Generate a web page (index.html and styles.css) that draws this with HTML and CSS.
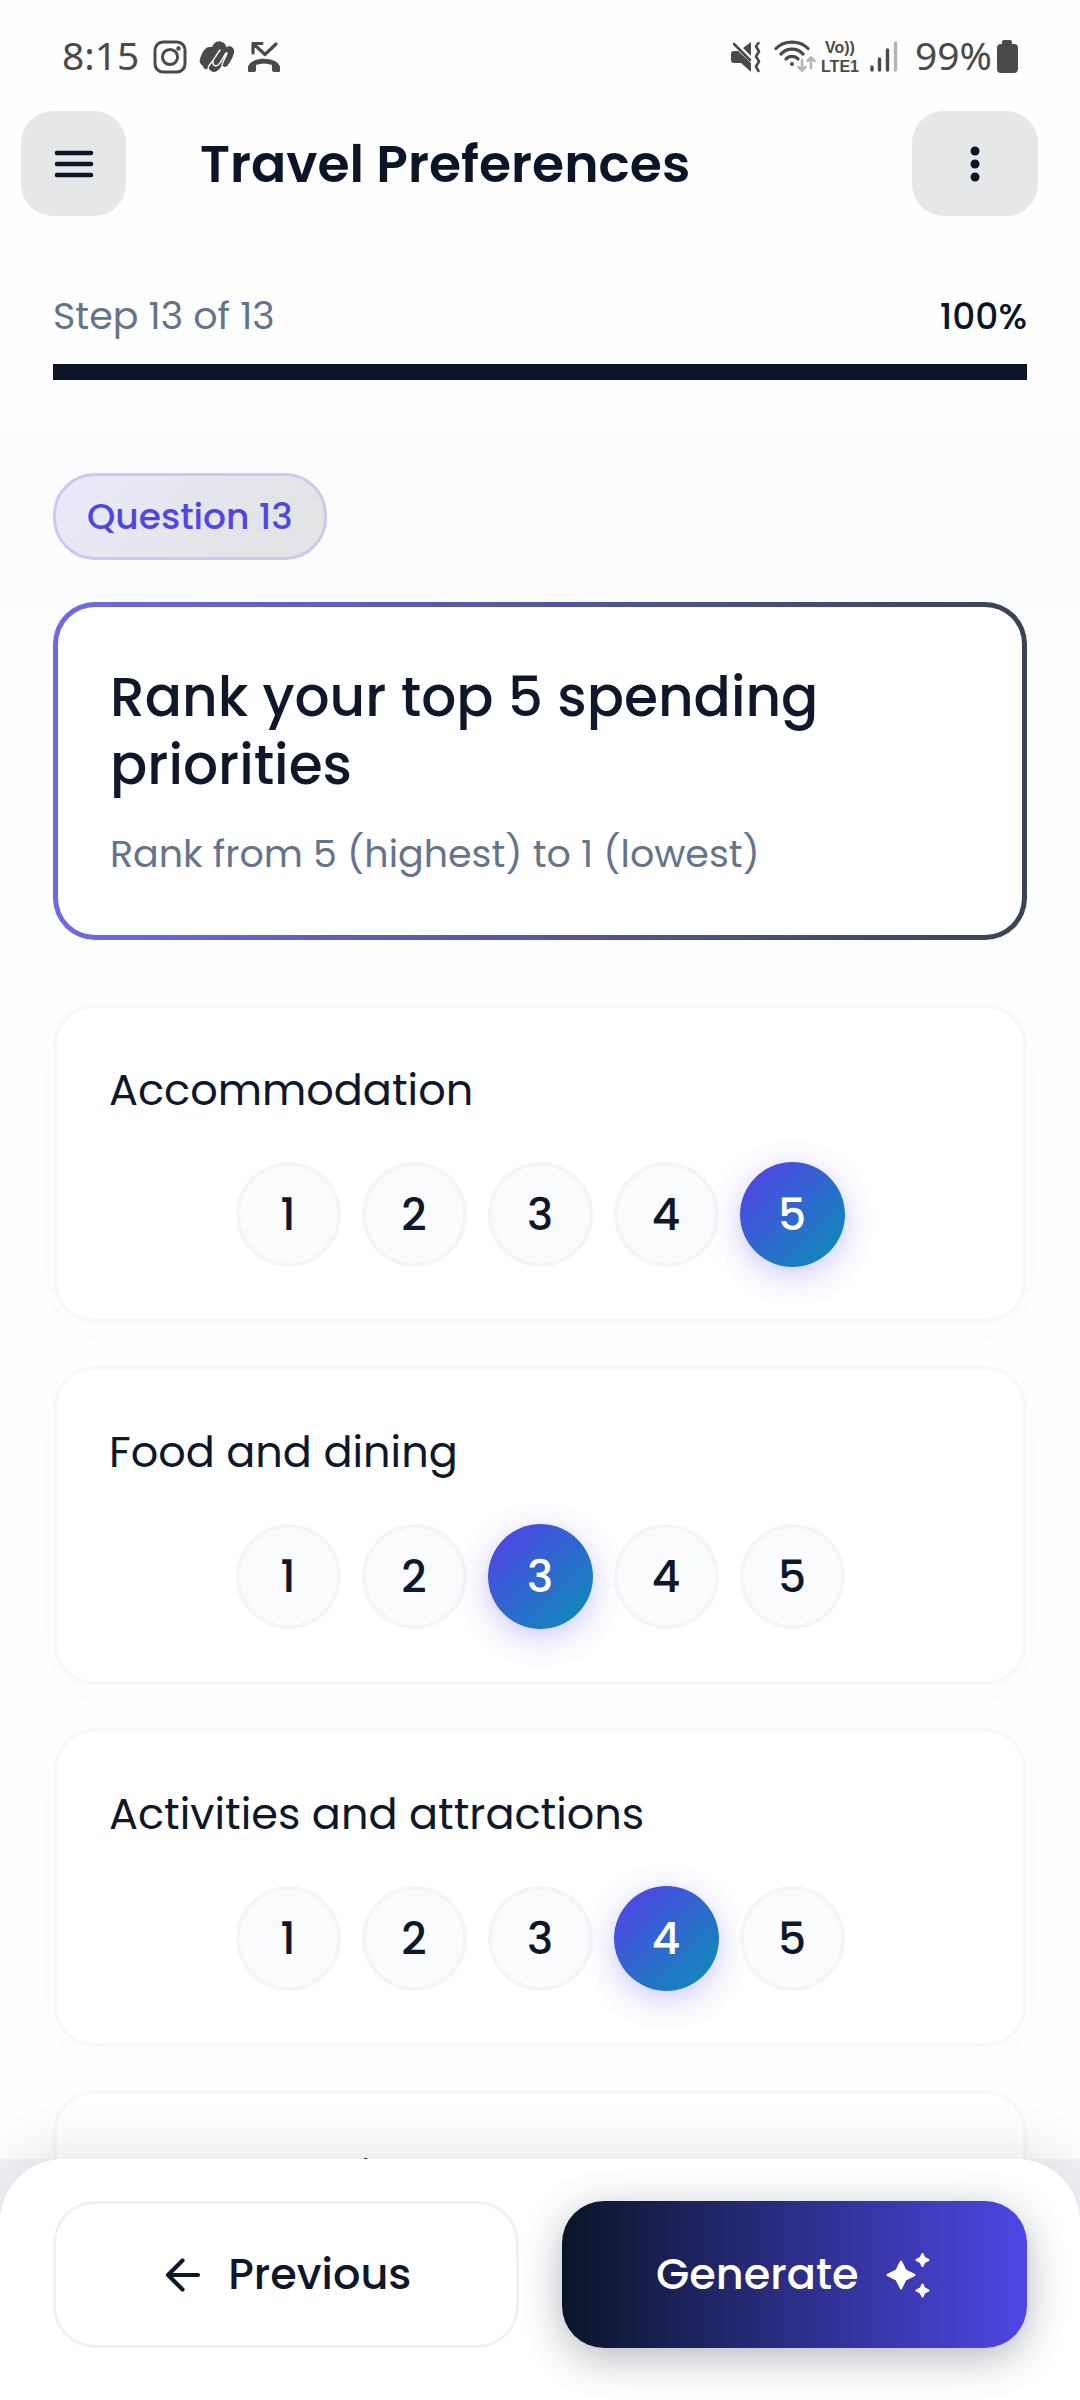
FILE: index.html
```html
<!DOCTYPE html>
<html lang="en">
<head>
<meta charset="utf-8">
<meta name="viewport" content="width=device-width, initial-scale=1">
<title>Travel Preferences</title>
<link rel="stylesheet" href="styles.css">
</head>
<body>
<div class="status">
  <div class="status-group status-left">
    <span class="status-text">8:15</span>
    <svg width="34" height="34" viewBox="0 0 34 34" fill="none" stroke="currentColor" stroke-width="3"><rect x="2" y="2" width="30" height="30" rx="8"/><circle cx="17" cy="17" r="7.6"/><circle cx="25.5" cy="8.5" r="2.2" fill="currentColor" stroke="none"/></svg>
    <svg width="36" height="32" viewBox="0 0 36 32"><path fill="currentColor" d="M1 18C3 12 5 7 10 6L13 6C15 1 19-1 23 1C26 2 27 4 27 6C32 4 36 7 35 12C34 16 31 21 29 24C27 27 24 26 23 24C21 28 18 31 15 31C13 31 11 29 10 28C6 29 4 27 4 25C1 23 0 21 1 18Z"/><path fill="none" stroke="#fff" stroke-width="1.4" stroke-linecap="round" d="M21 9C17 14 15 19 12 22C10 24 9 27 9 29M27 12C24 16 23 21 19 24C16 26 13 24 14 20M23 24C24 20 27 16 28 12"/></svg>
    <svg width="34" height="32" viewBox="0 0 34 32"><path fill="none" stroke="currentColor" stroke-width="3.2" stroke-linecap="round" stroke-linejoin="round" d="M15 2.5H6V12M6 2.5L18 13.5L29 3"/><path fill="currentColor" d="M1 30V26C3 15 31 15 33 26V30Q33 31 32 31H27Q25 31 25 29V24Q17 21 9 24V29Q9 31 7 31H2Q1 31 1 30Z"/></svg>
  </div>
  <div class="status-group status-right">
    <svg width="32" height="34" viewBox="0 0 32 34"><path fill="currentColor" d="M4 11H8L21 23V32L11 23H4Q1 23 1 20V14Q1 11 4 11ZM13 8L21 2V16Z"/><path fill="none" stroke="currentColor" stroke-width="2.6" stroke-linecap="round" stroke-linejoin="round" d="M4 4L20 20M28.500 3L26 6.500L29 11.500L26 16.500L29 21.500L26 26.500L28.500 31"/></svg>
    <svg class="status-wifi" width="43" height="34" viewBox="0 0 43 34" fill="none" stroke="currentColor" stroke-width="3.2" stroke-linecap="round"><path d="M2 8.500C10 0 26 0 34 8.500M7 14C13 7.500 23 7.500 29 14M12 19C15 15.500 21 15.500 24 19"/><circle cx="18" cy="24" r="2" fill="currentColor" stroke="none"/><path stroke="#b5b5b5" stroke-width="2.6" stroke-linejoin="round" d="M28 20V30M24.500 27L28 30.500L31.500 27M37 28V18M33.500 21L37 17.500L40.500 21"/></svg>
    <span class="status-network"><span>Vo))</span><span>LTE1</span></span>
    <svg class="status-signal" width="30" height="32" viewBox="0 0 30 32" stroke="currentColor" stroke-width="3.4" stroke-linecap="round"><path d="M3 26V29M10.500 18V29M18.500 9V29"/><path stroke="#b5b5b5" d="M26.500 2V29"/></svg>
    <span class="status-text">99%</span>
    <svg width="22" height="34" viewBox="0 0 22 34" fill="currentColor"><rect x="6" y="0" width="10" height="8" rx="2"/><rect x="1" y="4" width="21" height="29" rx="4"/></svg>
  </div>
</div>
<header class="topbar">
  <button class="icon-btn" type="button" aria-label="Menu"><svg width="48" height="48" viewBox="0 0 48 48" stroke="currentColor" stroke-width="4.6" stroke-linecap="round"><path d="M7 13H41M7 24H41M7 35H41"/></svg></button>
  <h1 class="page-title">Travel Preferences</h1>
  <button class="icon-btn icon-btn-wide" type="button" aria-label="More options"><svg width="48" height="48" viewBox="0 0 48 48" fill="currentColor"><circle cx="24" cy="11" r="4.500"/><circle cx="24" cy="24" r="4.500"/><circle cx="24" cy="37" r="4.500"/></svg></button>
</header>
<section class="progress">
  <div class="progress-row"><label for="step-progress">Step 13 of 13</label><strong class="percent">100%</strong></div>
  <progress id="step-progress" class="progress-bar" value="13" max="13"></progress>
</section>
<main class="content">
  <span class="tag">Question 13</span>
  <section class="question">
    <h2 class="question-title">Rank your top 5 spending priorities</h2>
    <p class="question-hint">Rank from 5 (highest) to 1 (lowest)</p>
  </section>
  <form class="options">
    <fieldset class="option">
      <legend class="option-name">Accommodation</legend>
      <div class="ratings">
        <label class="rating"><input type="radio" name="accommodation" value="1"><span>1</span></label>
        <label class="rating"><input type="radio" name="accommodation" value="2"><span>2</span></label>
        <label class="rating"><input type="radio" name="accommodation" value="3"><span>3</span></label>
        <label class="rating"><input type="radio" name="accommodation" value="4"><span>4</span></label>
        <label class="rating"><input type="radio" name="accommodation" value="5" checked><span>5</span></label>
      </div>
    </fieldset>
    <fieldset class="option">
      <legend class="option-name">Food and dining</legend>
      <div class="ratings">
        <label class="rating"><input type="radio" name="food" value="1"><span>1</span></label>
        <label class="rating"><input type="radio" name="food" value="2"><span>2</span></label>
        <label class="rating"><input type="radio" name="food" value="3" checked><span>3</span></label>
        <label class="rating"><input type="radio" name="food" value="4"><span>4</span></label>
        <label class="rating"><input type="radio" name="food" value="5"><span>5</span></label>
      </div>
    </fieldset>
    <fieldset class="option">
      <legend class="option-name">Activities and attractions</legend>
      <div class="ratings">
        <label class="rating"><input type="radio" name="activities" value="1"><span>1</span></label>
        <label class="rating"><input type="radio" name="activities" value="2"><span>2</span></label>
        <label class="rating"><input type="radio" name="activities" value="3"><span>3</span></label>
        <label class="rating"><input type="radio" name="activities" value="4" checked><span>4</span></label>
        <label class="rating"><input type="radio" name="activities" value="5"><span>5</span></label>
      </div>
    </fieldset>
    <fieldset class="option">
      <legend class="option-name">Transportation</legend>
    </fieldset>
  </form>
</main>
<footer class="footer">
  <div class="actions">
    <button class="action action-previous" type="button">
      <svg width="42" height="42" viewBox="0 0 42 42" fill="none" stroke="currentColor" stroke-width="4.2" stroke-linecap="round" stroke-linejoin="round"><path d="M38 21H8M22.500 6.500L8 21L22.500 35.500"/></svg>
      Previous
    </button>
    <button class="action action-generate" type="button">
      Generate
      <svg width="48" height="48" viewBox="0 0 48 48" fill="currentColor" stroke="currentColor" stroke-width="2" stroke-linejoin="round"><path d="M17 10.500L21.500 19.500L30.500 24L21.500 28.500L17 37.500L12.500 28.500L3.500 24L12.500 19.500ZM38.500 3L40.500 7L44.500 9L40.500 11L38.500 15L36.500 11L32.500 9L36.500 7ZM38.500 33.500L40.500 37.500L44.500 39.500L40.500 41.500L38.500 45.500L36.500 41.500L32.500 39.500L36.500 37.500Z"/></svg>
    </button>
  </div>
</footer>
</body>
</html>
```
FILE: styles.css
```css
* { box-sizing: border-box; }

body {
  display: flex;
  flex-direction: column;
  height: 100vh;
  margin: 0;
  background: #fefefe;
  color: #0f172a;
  font-family: Poppins, Inter, sans-serif;
}

h1, h2, p { margin: 0; }
button { font: inherit; color: inherit; border: 0; cursor: pointer; }
svg { flex: none; }

/* Device status bar */
.status {
  display: flex;
  flex: none;
  justify-content: space-between;
  padding: 28px 62px 25px;
  color: #4a4a4a;
  font-family: "Noto Sans", sans-serif;
}
.status-group { display: flex; align-items: center; }
.status-left { gap: 12px; }
.status-left .status-text { margin-right: 2px; }
.status-right { gap: 4px; }
.status-text { padding-bottom: 4px; font-size: 39px; line-height: 54px; }
.status-wifi { margin-left: 8px; }
.status-network {
  display: grid;
  justify-items: center;
  font-family: "Liberation Sans", sans-serif;
  font-size: 16px;
  font-weight: 700;
  line-height: 19px;
}
.status-signal { margin: 0 12px 0 6px; }

/* Header */
.topbar { display: flex; flex: none; align-items: center; padding: 0 42px 0 21px; color: #0a1528; }
.page-title { flex: 1; margin-left: 74px; font-size: 52px; font-weight: 600; line-height: 64px; }
.icon-btn {
  display: grid;
  place-items: center;
  width: 105px;
  height: 105px;
  padding: 0;
  border-radius: 32px;
  background: #e6e7e9;
}
.icon-btn-wide { width: 126px; }

/* Step progress */
.progress { flex: none; padding: 72px 53px 52px; }
.progress-row {
  display: flex;
  justify-content: space-between;
  align-items: baseline;
  margin-bottom: 19px;
  color: #64748b;
  font-size: 38px;
  line-height: 56px;
}
.percent { color: #0a1528; font-size: 36px; font-weight: 500; }
.progress-bar {
  display: block;
  width: 100%;
  height: 16px;
  border: 0;
  background: #e6e7e9;
  appearance: none;
}
.progress-bar::-webkit-progress-bar { background: #e6e7e9; }
.progress-bar::-webkit-progress-value { background: #0a1528; }

/* Scrolling content */
.content {
  flex: 1;
  min-height: 0;
  padding: 41px 53px;
  overflow-y: auto;
  scrollbar-width: none;
  background: linear-gradient(#fafbfd, #fdfefe 320px, #fefefe 640px);
}
.tag {
  display: block;
  width: fit-content;
  margin-bottom: 42px;
  padding: 15px 31px;
  border: 3px solid #cdc9ee;
  border-radius: 42px;
  background: linear-gradient(135deg, #ebe9fc, #e3e4e6 75%) border-box;
  color: #4f46e5;
  font-size: 36px;
  font-weight: 500;
  line-height: 51px;
}
.question {
  margin-bottom: 64px;
  padding: 56px 52px 52px;
  border: 5px solid transparent;
  border-radius: 42px;
  background:
    linear-gradient(#fff, #fff) padding-box,
    linear-gradient(90deg, #7069e4, #3b4454) border-box;
}
.question-title { font-size: 55px; font-weight: 500; line-height: 68px; }
.question-hint { margin-top: 26px; color: #64748b; font-size: 38px; line-height: 58px; }

.options { display: grid; gap: 43px; }
.option {
  display: flex;
  flex-direction: column;
  gap: 40px;
  min-width: 0;
  margin: 0;
  padding: 50px 52px 52px;
  border: 4px solid #f7f8fa;
  border-radius: 42px;
  background: #fff;
  box-shadow: 0 10px 40px rgba(15, 23, 42, 0.01);
}
.option-name { float: left; padding: 0; font-size: 43px; line-height: 64px; }
.ratings { display: flex; justify-content: center; gap: 21px; }
.rating {
  display: grid;
  place-items: center;
  width: 105px;
  height: 105px;
  font-size: 44px;
  font-weight: 500;
  line-height: 64px;
  cursor: pointer;
}
.rating input, .rating span { grid-area: 1 / 1; }
.rating input {
  width: 100%;
  height: 100%;
  margin: 0;
  border: 4px solid #f4f5f8;
  border-radius: 50%;
  background: #fafbfd;
  appearance: none;
}
.rating input:checked {
  border: 0;
  background: linear-gradient(135deg, #4f46e5 10%, #0891b2);
  box-shadow: 0 8px 32px rgba(79, 70, 229, 0.3);
}
.rating span { z-index: 1; }
.rating input:checked + span { color: #fff; }

/* Bottom actions */
.footer { position: relative; z-index: 1; flex: none; background: #f4f5f9; }
.actions {
  display: grid;
  grid-template-columns: 1fr 1fr;
  gap: 43px;
  padding: 42px 53px 52px;
  border-radius: 63px 63px 0 0;
  background: #fff;
  box-shadow: 0 -10px 52px rgba(0, 0, 0, 0.1);
}
.action {
  display: flex;
  justify-content: center;
  align-items: center;
  gap: 26px;
  padding: 42px 20px;
  border-radius: 42px;
  font-size: 43px;
  font-weight: 500;
  line-height: 63px;
}
.action-previous { background: #fff; box-shadow: inset 0 0 0 3px #eff1f6; }
.action-generate {
  background: linear-gradient(90deg, #0a1528, #4f46e5);
  box-shadow: 0 10px 42px rgba(10, 21, 40, 0.3);
  color: #fff;
}
```
